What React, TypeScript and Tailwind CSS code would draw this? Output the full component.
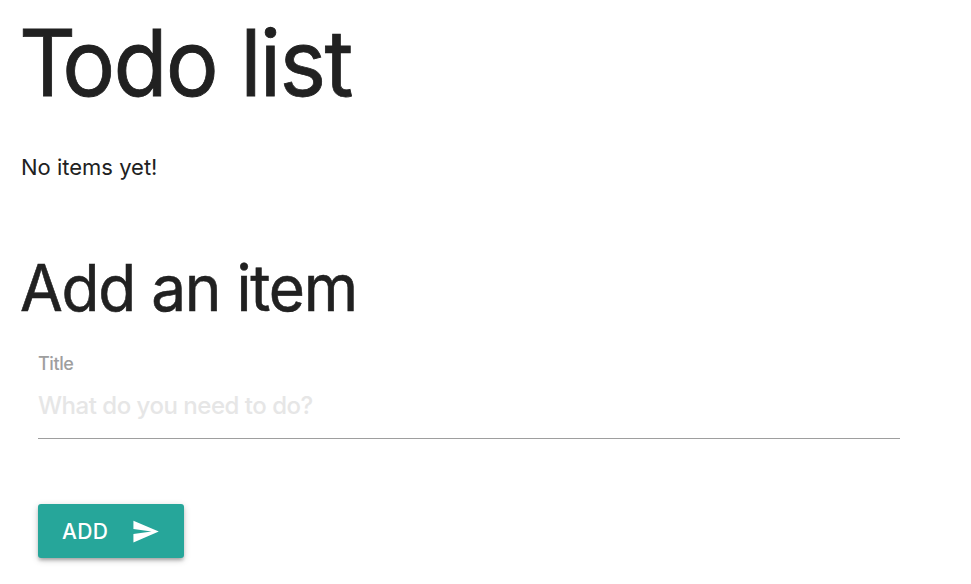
import React from "react";

export default function App() {
  return (
    <main className="h-[584px] overflow-hidden bg-white px-[21px] font-['Inter',sans-serif] text-[#212121]">
      <h1 className="-ml-[2px] origin-left scale-x-[0.96] pt-[8px] text-[92px] leading-[110px] font-normal tracking-[-1.8px] whitespace-nowrap [-webkit-text-stroke:0.8px_#212121]"><span className="tracking-[-14.3px]">T</span>odo list</h1>
      <p className="mt-[32px] text-[22px] leading-[34px] whitespace-nowrap">No items yet!</p>
      <h2 className="-ml-px origin-left scale-x-[0.97] mt-[65px] text-[64px] leading-[78px] font-normal tracking-[-1.3px] whitespace-nowrap [-webkit-text-stroke:0.6px_#212121]">Add an item</h2>
      <form className="ml-[17px] w-[862px]">
        <label className="mt-[25px] block text-[18px] leading-[24px] font-medium tracking-[-0.4px] text-[#9e9e9e]">Title</label>
        <input placeholder="What do you need to do?" className="block h-[63px] w-full border-b border-[#9e9e9e] pb-[4px] text-[24px] font-medium tracking-[-0.48px] outline-none placeholder:text-[#e6e6e6]" />
        <button type="button" className="mt-[65px] flex h-[54px] w-[146px] items-center rounded-[3px] bg-[#26a69a] pl-[24px] text-[21px] font-medium tracking-[0.3px] text-white shadow-[0_3px_3px_rgba(0,0,0,0.14),0_4px_2px_-3px_rgba(0,0,0,0.12),0_2px_7px_rgba(0,0,0,0.2)]">
          <span className="w-[69px] pt-[2px] text-left">ADD</span>
          <svg className="h-[29px] w-[29px]" viewBox="0 0 24 24" fill="currentColor"><path d="M2.01 21 23 12 2.01 3 2 10l15 2-15 2z" /></svg>
        </button>
      </form>
    </main>
  );
}
